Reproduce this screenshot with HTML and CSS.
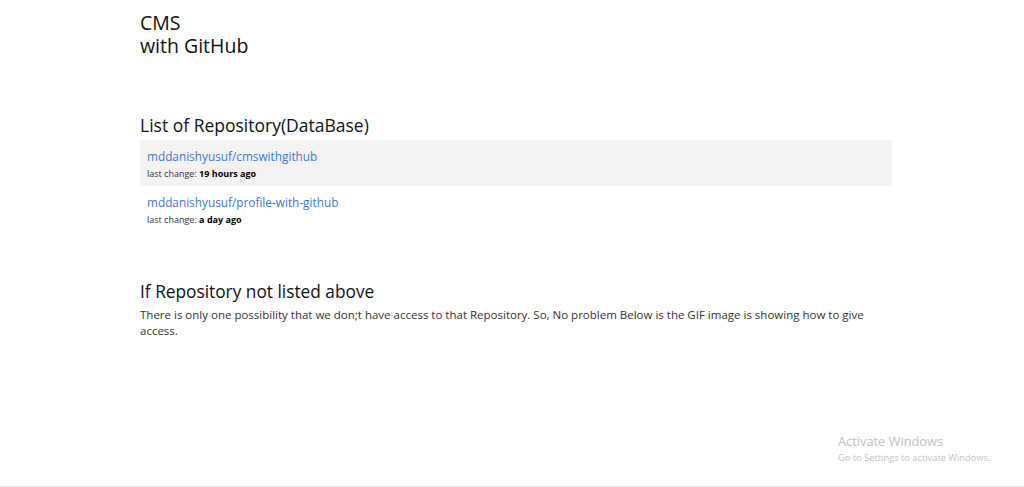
FILE: index.html
```html
<!DOCTYPE html>
<html>
<head>
<meta charset="utf-8">
<link rel="stylesheet" href="styles.css">
</head>
<body>
<div class="page">
  <main class="container">
    <h1 class="brand"><span class="brand-line">CMS</span><span class="brand-line">with GitHub</span></h1>
    <section class="repos">
      <h2 class="section-title">List of Repository(DataBase)</h2>
      <ul class="repo-list">
        <li class="repo repo-active">
          <a class="repo-link" href="#">mddanishyusuf/cmswithgithub</a>
          <div class="repo-meta">last change: <b>19 hours ago</b></div>
        </li>
        <li class="repo">
          <a class="repo-link" href="#">mddanishyusuf/profile-with-github</a>
          <div class="repo-meta">last change: <b>a day ago</b></div>
        </li>
      </ul>
    </section>
    <section class="help">
      <h2 class="help-title">If Repository not listed above</h2>
      <p class="help-text">There is only one possibility that we don;t have access to that Repository. So, No problem Below is the GIF image is showing how to give access.</p>
    </section>
  </main>
  <div class="activate">
    <div class="activate-title">Activate Windows</div>
    <div class="activate-sub">Go to Settings to activate Windows.</div>
  </div>
</div>
</body>
</html>
```
FILE: styles.css
```css
* { box-sizing: border-box; }
html, body { margin: 0; padding: 0; }
body {
  font-family: "Open Sans", "DejaVu Sans", sans-serif;
  color: #111;
  background: #fff;
}
.page {
  height: 487px;
  border-bottom: 1px solid #e2e2e2;
  position: relative;
  overflow: hidden;
}
.container {
  width: 752px;
  margin-left: 140px;
  padding-top: 11px;
}
.brand {
  margin: 0;
  font-size: 19.5px;
  font-weight: 400;
  color: #111;
}
.brand-line {
  display: block;
  height: 23px;
  line-height: 23px;
}
.repos { margin-top: 56px; }
.section-title {
  margin: 0 0 3px;
  font-size: 17.5px;
  font-weight: 400;
  line-height: 24px;
  color: #111;
}
.repo-list { list-style: none; margin: 0; padding: 0; }
.repo {
  padding: 8px 7px 5px;
  height: 46px;
}
.repo-active { background: #f4f3f2; }
.repo-link {
  display: block;
  color: #3a7bd5;
  text-decoration: none;
  font-size: 11.8px;
  line-height: 16px;
}
.repo-meta {
  margin-top: 3px;
  font-size: 9px;
  line-height: 14px;
  color: #333;
}
.repo-meta b { color: #000; font-weight: 700; }
.help { margin-top: 49px; }
.help-title {
  margin: 0;
  font-size: 17.3px;
  font-weight: 400;
  line-height: 22px;
  color: #111;
}
.help-text {
  margin: 4px 0 0;
  font-size: 11.5px;
  line-height: 16px;
  color: #333;
}
.activate {
  position: absolute;
  left: 838px;
  top: 433px;
  font-family: "Open Sans", "DejaVu Sans", sans-serif;
  color: #c2c2c2;
}
.activate-title { font-size: 12.8px; line-height: 17px; }
.activate-sub { font-size: 9.3px; line-height: 15px; }
```
